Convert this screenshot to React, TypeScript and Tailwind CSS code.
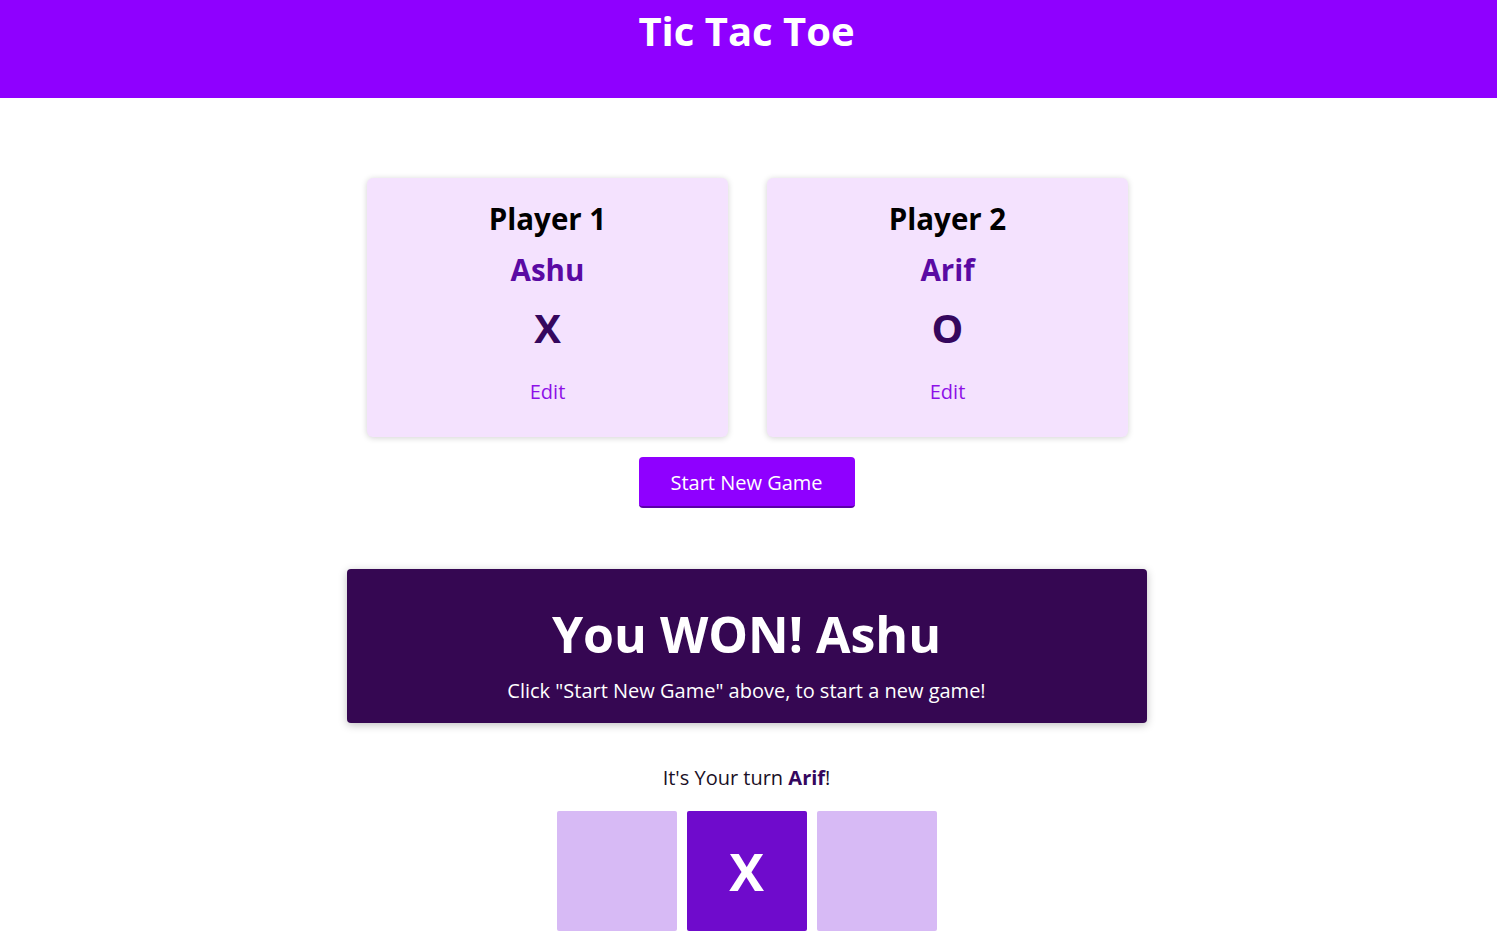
import { useState } from "react";

type Player = {
  label: string;
  name: string;
  symbol: string;
};

const players: Player[] = [
  { label: "Player 1", name: "Ashu", symbol: "X" },
  { label: "Player 2", name: "Arif", symbol: "O" },
];

const PlayerCard = ({ player }: { player: Player }) => (
  <li className="flex h-[259px] w-[361px] flex-col items-center rounded-md bg-[#f4e2fe] pt-[20px] shadow-[0_1px_6px_rgba(0,0,0,0.18)]">
    <h2 className="text-[29.5px] leading-[42px] font-bold text-black">{player.label}</h2>
    <p className="mt-[9px] text-[29.5px] leading-[42px] font-bold text-[#5a0aa3]">{player.name}</p>
    <p className="mt-[9px] text-[40px] leading-[56px] font-bold text-[#35075e]">{player.symbol}</p>
    <button className="mt-[21px] text-[20px] leading-[30px] text-[#8d10e8]">Edit</button>
  </li>
);

const App = () => {
  const [board] = useState<string[]>(["", "X", ""]);

  return (
    <div className="min-h-screen bg-white font-['Open_Sans',sans-serif]">
      <header className="flex h-[98px] justify-center bg-[#8f00ff] pr-[4px]">
        <h1 className="text-[40px] leading-[62px] font-bold text-white">Tic Tac Toe</h1>
      </header>

      <main className="flex flex-col items-center pt-[80px] pr-[4px]">
        <ol className="flex gap-[39px] pl-[2px]">
          {players.map((p) => (
            <PlayerCard key={p.label} player={p} />
          ))}
        </ol>

        <button className="mt-[20px] h-[51px] w-[216px] rounded-[4px] border-b-2 border-[#5b00a8] bg-[#8f00ff] pt-[3px] text-[20px] text-white">
          Start New Game
        </button>

        <section className="mt-[61px] flex h-[154px] w-[800px] flex-col items-center rounded-[4px] bg-[#350752] pt-[30px] text-white shadow-[0_2px_8px_rgba(0,0,0,0.25)]">
          <h2 className="text-[50px] leading-[70px] font-bold">You WON! Ashu</h2>
          <p className="mt-[7px] text-[20px] leading-[30px]">
            Click "Start New Game" above, to start a new game!
          </p>
        </section>

        <p className="mt-[40px] text-[20px] leading-[30px] text-[#1a1026]">
          It's Your turn <span className="font-bold text-[#35075e]">Arif</span>!
        </p>

        <ol className="mt-[18px] flex gap-[10px]">
          {board.map((cell, i) => (
            <li
              key={i}
              className={
                cell
                  ? "flex h-[120px] w-[120px] items-center justify-center rounded-[2px] bg-[#6f0bcc] text-[52px] font-bold text-white"
                  : "h-[120px] w-[120px] rounded-[2px] bg-[#d7baf5]"
              }
            >
              {cell}
            </li>
          ))}
        </ol>
      </main>
    </div>
  );
};

export default App;
